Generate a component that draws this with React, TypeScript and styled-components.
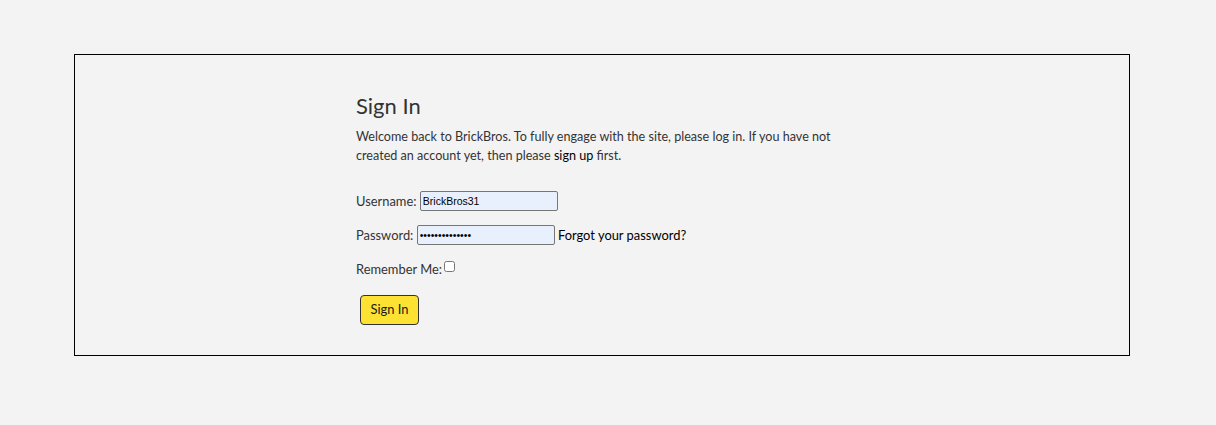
import React from "react";
import styled, { createGlobalStyle } from "styled-components";

const Global = createGlobalStyle`
  html, body { margin: 0; padding: 0; background: #f3f3f3; }
  body { font-family: Lato, "Noto Sans", sans-serif; color: #333; }
  * { box-sizing: border-box; }
`;

const Page = styled.div`
  padding: 54px 0 0 74px;
`;

const Card = styled.section`
  width: 1056px;
  height: 302px;
  border: 1px solid #000;
  padding: 37px 0 0 281px;
`;

const Content = styled.div`
  width: 500px;
`;

const Title = styled.h1`
  margin: 0;
  font-size: 22px;
  font-weight: 400;
  line-height: 28.8px;
  color: #333;
`;

const Intro = styled.p`
  margin: 6px 0 0;
  font-size: 12.6px;
  line-height: 19.4px;
  color: #333;
`;

const Link = styled.a`
  color: #000;
  text-decoration: none;
`;

const Form = styled.form`
  margin-top: 25px;
  display: flex;
  flex-direction: column;
  gap: 14px;
`;

const Row = styled.div`
  display: flex;
  align-items: center;
  height: 20px;
  font-size: 12.9px;
  color: #333;
`;

const Label = styled.label`
  white-space: pre;
`;

const Input = styled.input`
  width: 138px;
  height: 20px;
  padding: 1px 2px;
  border: 1px solid #767676;
  border-radius: 2px;
  background: #e8f0fe;
  font-family: "Liberation Sans", Arial, sans-serif;
  font-size: 10.5px;
  color: #000;
  outline: none;
`;

const Checkbox = styled.input`
  width: 11px;
  height: 11px;
  margin: 0 0 4px 2px;
`;

const Button = styled.button`
  margin: 2px 0 0 4px;
  align-self: flex-start;
  width: 59px;
  height: 30px;
  background: #fde133;
  border: 1px solid #333;
  border-radius: 4px;
  font-family: Lato, "Noto Sans", sans-serif;
  font-size: 12.9px;
  color: #1a1a1a;
  padding: 0 0 2px;
`;

export default function App() {
  return (
    <Page>
      <Global />
      <Card>
        <Content>
          <Title>Sign In</Title>
          <Intro>
            Welcome back to BrickBros. To fully engage with the site, please log in. If you have not
            created an account yet, then please <Link href="#">sign up</Link> first.
          </Intro>
          <Form onSubmit={(e) => e.preventDefault()}>
            <Row>
              <Label htmlFor="u">Username: </Label>
              <Input id="u" type="text" defaultValue="BrickBros31" />
            </Row>
            <Row>
              <Label htmlFor="p">Password: </Label>
              <Input id="p" type="password" defaultValue="brickbros31pwd" />
              <Link href="#">&nbsp;Forgot your password?</Link>
            </Row>
            <Row>
              <Label htmlFor="r">Remember Me:</Label>
              <Checkbox id="r" type="checkbox" />
            </Row>
            <Button type="submit">Sign In</Button>
          </Form>
        </Content>
      </Card>
    </Page>
  );
}
